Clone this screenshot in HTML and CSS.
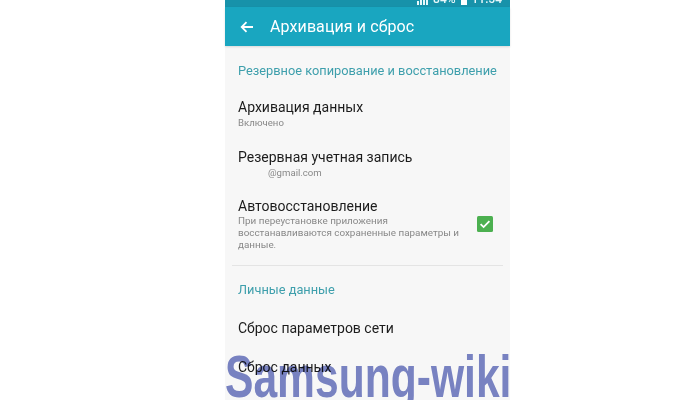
FILE: index.html
```html
<!DOCTYPE html>
<html lang="ru">
<head>
<meta charset="utf-8">
<link rel="stylesheet" href="styles.css">
</head>
<body>
<div class="phone">
  <div class="status">
    <div class="status-row">
      <span class="sig"><i></i><i></i><i></i><i></i></span>
      <span>84%</span>
      <span class="batt"></span>
      <span>11:54</span>
    </div>
  </div>
  <div class="appbar">
    <svg class="back" width="14" height="12" viewBox="0 0 14 12"><path d="M13 6H2M6.5 1.2L1.7 6l4.8 4.8" fill="none" stroke="#fff" stroke-width="1.8"/></svg>
    <span class="title">Архивация и сброс</span>
  </div>
  <div class="content">
    <div class="sec sec-first">Резервное копирование и восстановление</div>
    <div class="item item-1">
      <div class="main">Архивация данных</div>
      <div class="sub">Включено</div>
    </div>
    <div class="item item-2">
      <div class="main">Резервная учетная запись</div>
      <div class="sub sub-indent">@gmail.com</div>
    </div>
    <div class="item item-3 row">
      <div class="col">
        <div class="main">Автовосстановление</div>
        <div class="desc">При переустановке приложения<br>восстанавливаются сохраненные параметры и<br>данные.</div>
      </div>
      <span class="check"><svg width="16" height="16" viewBox="0 0 16 16"><rect width="16" height="16" rx="1.5" fill="#4cb050"/><path d="M3.6 8.2l3 2.9 5.8-6" fill="none" stroke="#fff" stroke-width="1.8"/></svg></span>
    </div>
    <div class="divider"></div>
    <div class="sec sec-second">Личные данные</div>
    <div class="item item-4"><div class="main">Сброс параметров сети</div></div>
    <div class="item item-5"><div class="main">Сброс данных</div></div>
  </div>
</div>
<div class="watermark">Samsung-wiki</div>
</body>
</html>
```
FILE: styles.css
```css
html, body {
  margin: 0;
  padding: 0;
  background: #ffffff;
}
body {
  width: 700px;
  height: 400px;
  overflow: hidden;
  position: relative;
  font-family: Roboto, "Liberation Sans", sans-serif;
}
.phone {
  margin-left: 225px;
  width: 285px;
  height: 400px;
  background: #f7f7f7;
  display: flex;
  flex-direction: column;
}
.status {
  height: 7px;
  background: #1792aa;
  overflow: hidden;
  display: flex;
  justify-content: flex-end;
}
.status-row {
  display: flex;
  align-items: flex-end;
  gap: 5px;
  margin-top: -7px;
  height: 12px;
  padding-right: 8px;
  color: #e8f7fa;
  font-size: 12px;
  line-height: 12px;
  font-weight: 500;
}
.sig { display: flex; align-items: flex-end; gap: 1px; height: 12px; }
.sig i { display: block; width: 2px; background: #e8f7fa; }
.sig i:nth-child(1) { height: 4px; }
.sig i:nth-child(2) { height: 6px; }
.sig i:nth-child(3) { height: 9px; }
.sig i:nth-child(4) { height: 12px; }
.batt { width: 6px; height: 12px; background: #ffffff; }
.appbar {
  height: 39px;
  background: #19a6c0;
  display: flex;
  align-items: center;
  box-shadow: 0 1px 2px rgba(0,0,0,0.12);
}
.back { margin-left: 15px; margin-right: 16px; }
.title {
  color: #ffffff;
  font-size: 16px;
  letter-spacing: 0.1px;
}
.content {
  padding: 0 17px 0 13px;
}
.sec {
  color: #3e9fac;
  font-size: 12.8px;
  line-height: 16px;
  white-space: nowrap;
}
.sec-first { margin-top: 17px; }
.sec-second { margin-top: 16px; }
.main {
  color: #1c1c1c;
  font-size: 14px;
  line-height: 18px;
}
.sub {
  color: #888888;
  font-size: 9.6px;
  line-height: 14px;
}
.sub-indent { padding-left: 30px; }
.desc {
  color: #888888;
  font-size: 9.9px;
  line-height: 12px;
  white-space: nowrap;
}
.item-1 { margin-top: 19px; }
.item-2 { margin-top: 18px; }
.item-3 { margin-top: 17px; }
.item-4 { margin-top: 21px; }
.item-5 { margin-top: 21px; }
.row {
  display: flex;
  align-items: center;
  justify-content: space-between;
}
.check { display: flex; margin-right: 0; }
.divider {
  height: 1px;
  background: #e4e4e4;
  margin: 14px -10px 0 -6px;
}
.watermark {
  position: absolute;
  left: 225px;
  top: 347px;
  font-family: "Liberation Sans", Arial, sans-serif;
  font-weight: bold;
  font-size: 60px;
  line-height: 60px;
  color: #7c86c8;
  transform: scaleX(0.71);
  transform-origin: left top;
  white-space: nowrap;
  mix-blend-mode: multiply;
}
```
